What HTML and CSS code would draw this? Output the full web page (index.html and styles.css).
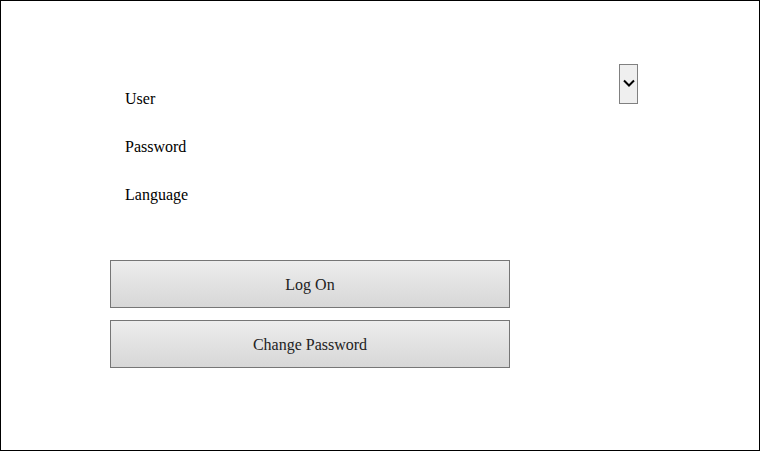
FILE: index.html
```html
<!DOCTYPE html>
<html>
<head>
<meta charset="utf-8">
<link rel="stylesheet" href="styles.css">
</head>
<body>
<div class="frame">
  <div class="form">
    <div class="labels">
      <div class="label">User</div>
      <div class="label">Password</div>
      <div class="label">Language</div>
    </div>
    <div class="dropdown">
      <svg width="12" height="9" viewBox="0 0 12 9"><path d="M1 1.5 L6 6.5 L11 1.5" fill="none" stroke="#000" stroke-width="2"/></svg>
    </div>
  </div>
  <div class="buttons">
    <button class="btn">Log On</button>
    <button class="btn">Change Password</button>
  </div>
</div>
</body>
</html>
```
FILE: styles.css
```css
html, body {
  margin: 0;
  padding: 0;
  background: #fff;
}
.frame {
  box-sizing: border-box;
  width: 760px;
  height: 451px;
  border: 1px solid #000;
  padding-top: 63px;
  font-family: "Liberation Serif", "Times New Roman", serif;
  font-size: 16px;
  color: #000;
}
.form {
  display: flex;
  align-items: flex-start;
}
.labels {
  margin-left: 124px;
  padding-top: 11px;
}
.label {
  height: 48px;
  line-height: 48px;
}
.dropdown {
  box-sizing: border-box;
  margin-left: auto;
  margin-right: 121px;
  width: 19px;
  height: 40px;
  border: 1px solid #808080;
  background: #efefef;
  display: flex;
  align-items: center;
  justify-content: center;
  padding-bottom: 2px;
}
.buttons {
  margin-top: 41px;
  margin-left: 109px;
  display: flex;
  flex-direction: column;
  gap: 12px;
}
.btn {
  box-sizing: border-box;
  width: 400px;
  height: 48px;
  border: 1px solid #767676;
  background: linear-gradient(#ededed, #d7d7d7);
  font-family: "Liberation Serif", "Times New Roman", serif;
  font-size: 16px;
  color: #222;
  padding: 2px 0 0 0;
  margin: 0;
}
```
